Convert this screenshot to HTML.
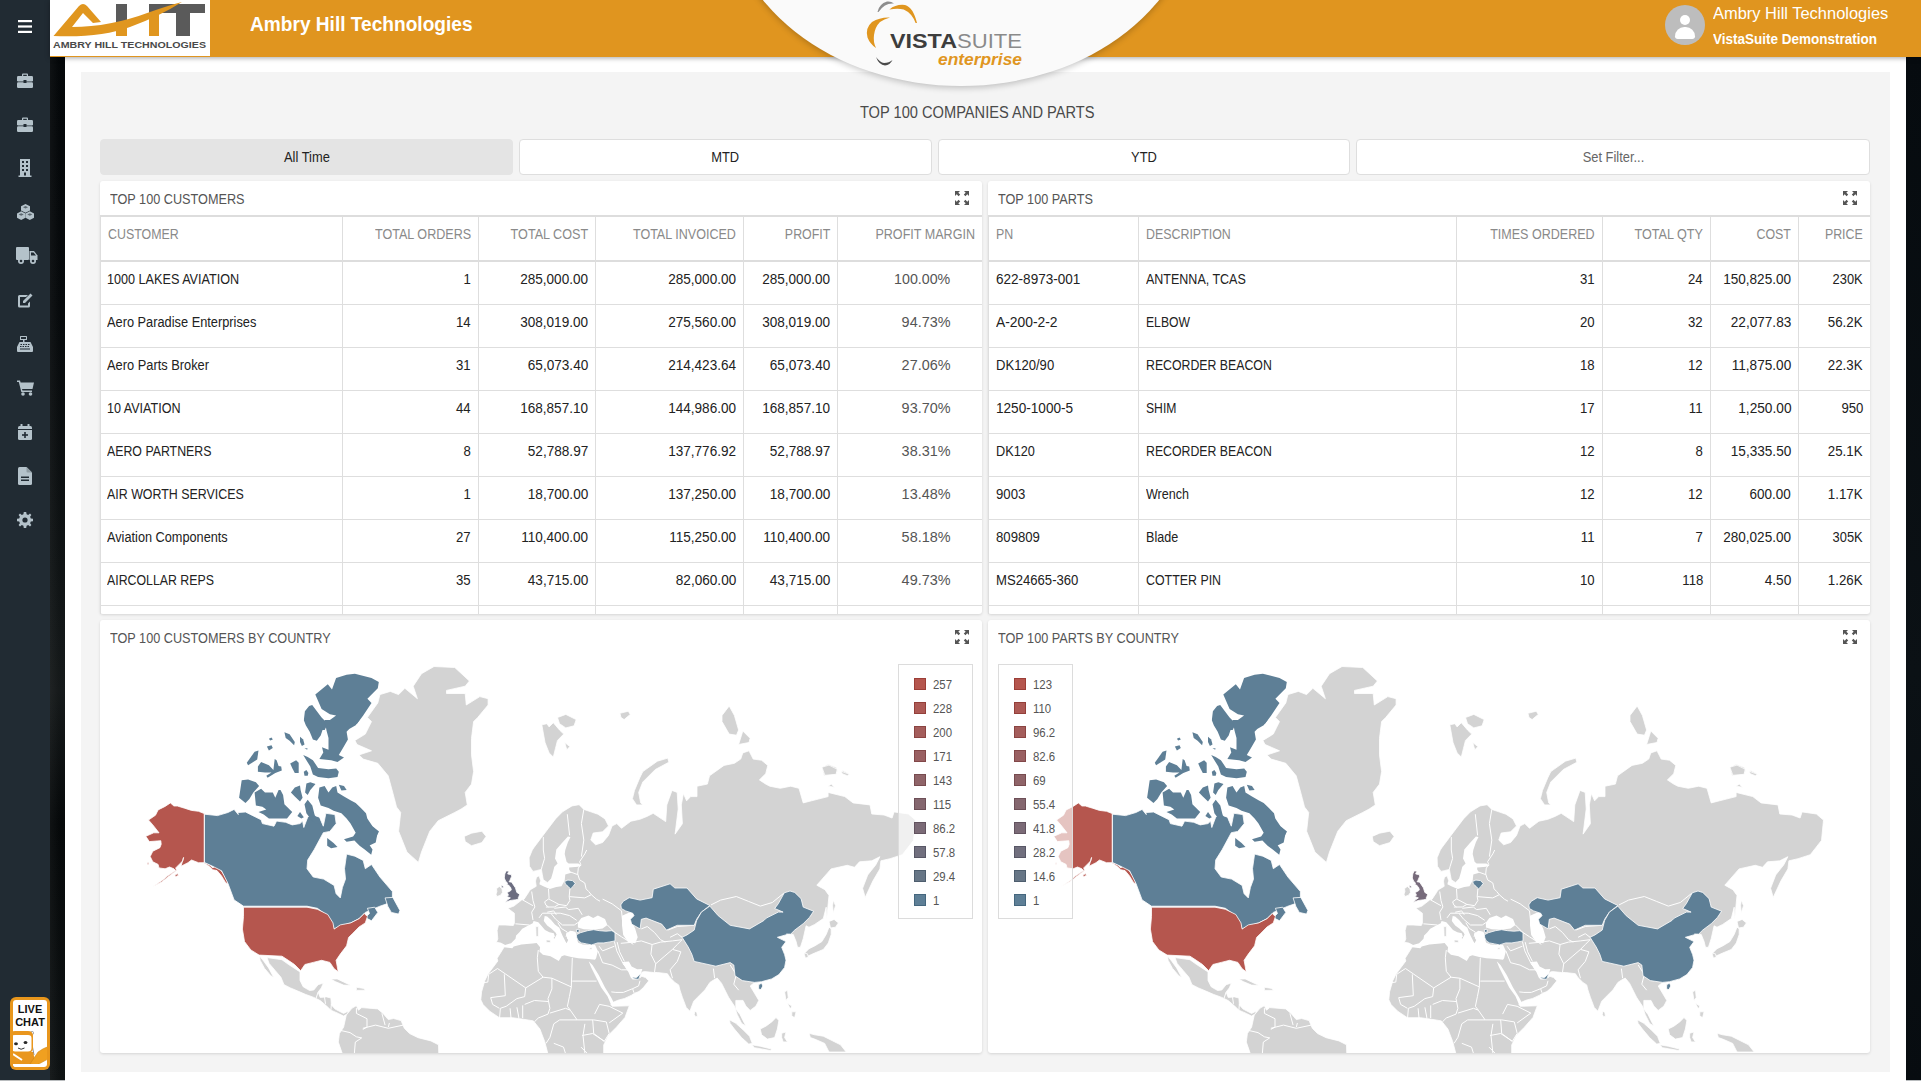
<!DOCTYPE html>
<html><head><meta charset="utf-8">
<style>
*{box-sizing:border-box;margin:0;padding:0}
html,body{width:1921px;height:1081px;overflow:hidden;background:#fff;font-family:"Liberation Sans",sans-serif}
.abs{position:absolute}
#side{position:absolute;left:0;top:0;width:50px;height:1081px;background:#212b33}
#strip{position:absolute;left:50px;top:57px;width:15px;height:1023px;background:linear-gradient(90deg,rgba(255,255,255,.04),rgba(0,0,0,0) 60%),linear-gradient(180deg,#05080a 0%,#080b0d 25%,#101415 50%,#161a1b 62%,#06090a 75%,#0f1314 100%)}
#strip2{position:absolute;left:1906px;top:57px;width:15px;height:1024px;background:linear-gradient(180deg,#060b0f 0%,#0b1115 60%,#070c10 100%)}
#top{position:absolute;left:50px;top:0;width:1871px;height:57px;background:#e0951f;box-shadow:0 1px 5px rgba(0,0,0,.35)}
#logo{position:absolute;left:50px;top:0;width:160px;height:56px;background:#fff}
#panel{position:absolute;left:81px;top:72px;width:1809px;height:1000px;background:#f4f4f4}
.btn{position:absolute;top:139px;height:36px;border:1px solid #dedede;border-radius:4px;background:#fff;font-size:14px;color:#333;text-align:center;line-height:34px}
.card{position:absolute;background:#fff;border-radius:3px;box-shadow:0 1px 3px rgba(0,0,0,.13)}
.ctitle{position:absolute;left:10px;top:10px;font-size:14px;color:#555;white-space:nowrap}
.ctitle span{display:inline-block;transform:scaleX(.905);transform-origin:left center}
.hl{position:absolute;height:1px;background:#dedede}
.hl2{position:absolute;height:2px;background:#dddddd}
.vl{position:absolute;top:217px;width:1px;height:397px;background:#dedede}
.th{position:absolute;top:217px;height:43px;font-size:14px;line-height:35px;color:#8a8a8a;white-space:nowrap}
.td{position:absolute;height:43px;font-size:14px;line-height:35px;color:#222;white-space:nowrap}
.pm{color:#555}
.sl,.sr{display:inline-block}.sl{transform-origin:left center}.sr{transform-origin:right center}.hx{transform:scaleX(.885)}.bx{transform:scaleX(.92)}
.exp{position:absolute;width:14px;height:14px}
.leg{position:absolute;top:664px;width:75px;height:255px;border:1px solid #dcdcdc;background:rgba(255,255,255,.65)}
.li{position:absolute;left:15px;width:12px;height:12px}
.lt{position:absolute;left:34px;font-size:12px;color:#555;line-height:12px;white-space:nowrap}
.ico{position:absolute;left:0;width:50px;display:flex;justify-content:center}
</style></head><body>
<div id="side"></div>
<div id="strip"></div>
<div id="strip2"></div>
<div id="panel"></div>
<div id="top"></div>

<!-- ellipse -->
<div class="abs" style="left:725.5px;top:-286px;width:470px;height:372px;border-radius:50%;background:#fafafa;box-shadow:0 2px 6px rgba(0,0,0,.22)"></div>
<div class="abs" style="left:700px;top:57px;width:530px;height:15px;background:transparent"></div>

<div id="logo">
<svg width="160" height="56" viewBox="0 0 160 56">
 <path d="M66 4 H77 V36 H66 Z" fill="#5a5a5a"/>
 <path d="M99 4 H155 V13 H140 V36 H126 V13 H99 Z" fill="#5a5a5a"/>
 <path d="M99 4 H109 V36 H99 Z" fill="#5a5a5a"/>
 <path d="M3.5 36 L29 6 Q33 2 37 6 L51 22 L43 23 L33 13 L22 27 Q60 27 100 12 Q120 5 132 2 Q110 16 80 27 Q50 38 3.5 36 Z" fill="#e0961f"/>
 <path d="M66 27 V36 H77 V24 Z" fill="#e0961f"/>
 <path d="M99 17 V36 H109 V13 Z" fill="#e0961f"/>
 <text x="3" y="48" font-family="Liberation Sans" font-weight="bold" font-size="9.6" fill="#4a4a4a" textLength="153" lengthAdjust="spacingAndGlyphs">AMBRY HILL TECHNOLOGIES</text>
</svg>
</div>
<div class="abs" style="left:250px;top:13px;font-size:20px;font-weight:bold;color:#fff;white-space:nowrap"><span style="display:inline-block;transform:scaleX(.955);transform-origin:left">Ambry Hill Technologies</span></div>

<!-- vistasuite logo -->
<svg class="abs" style="left:860px;top:0" width="170" height="72" viewBox="0 0 170 72">
 <path d="M17.5 12 Q19 4 27 1.5 Q31 1 34 3.5 Q29 3 25 5.5 Q21 8 18.5 12 Z" fill="#8d8d8d"/>
 <path d="M29.4 9.4 Q36 4 45 5 Q53 7 57 23 L55.6 23 Q52 13 43.7 9.4 Q38 8 29.4 9.4 Z" fill="#e0961f"/>
 <path d="M30 17.5 Q20 17 12 22 Q5 28 7.5 37.5 Q10 44 16 48 Q13 42 14 35 Q15 27 20 22 Q24 19 30 17.5 Z" fill="#e0961f"/>
 <path d="M16 57 Q20 62.5 24 63 Q29 63 32.5 60 Q30 65 25 65.5 Q19 65 16 57 Z" fill="#4a4a4a"/>
 <text x="30" y="47.5" font-family="Liberation Sans" font-weight="bold" font-size="20.5" fill="#3d3d3d" textLength="67" lengthAdjust="spacingAndGlyphs">VISTA</text>
 <text x="97" y="47.5" font-family="Liberation Sans" font-size="20.5" fill="#8a8a8a" textLength="65" lengthAdjust="spacingAndGlyphs">SUITE</text>
 <text x="78" y="65" font-family="Liberation Sans" font-weight="bold" font-style="italic" font-size="17" fill="#e0961f" textLength="84" lengthAdjust="spacingAndGlyphs">enterprise</text>
</svg>

<!-- user -->
<div class="abs" style="left:1665px;top:5px;width:40px;height:40px;border-radius:50%;background:#bdbdbd;overflow:hidden">
 <div class="abs" style="left:15px;top:10px;width:10px;height:10px;border-radius:50%;background:#fff"></div>
 <div class="abs" style="left:10px;top:22px;width:20px;height:12px;border-radius:10px 10px 3px 3px;background:#fff"></div>
</div>
<div class="abs" style="left:1713px;top:4px;font-size:17px;color:#fff;white-space:nowrap"><span style="display:inline-block;transform:scaleX(.968);transform-origin:left">Ambry Hill Technologies</span></div>
<div class="abs" style="left:1713px;top:30px;font-size:15px;font-weight:bold;color:#fff;white-space:nowrap"><span style="display:inline-block;transform:scaleX(.9);transform-origin:left">VistaSuite Demonstration</span></div>

<!-- sidebar icons -->
<div class="ico" style="top:20px;left:0px"><svg width="14" height="13" viewBox="0 0 14 13"><rect x="0" y="0" width="14" height="2.2" fill="#fff"/><rect x="0" y="5.4" width="14" height="2.2" fill="#fff"/><rect x="0" y="10.8" width="14" height="2.2" fill="#fff"/></svg></div>
<div class="ico" style="top:73px;left:0px"><svg width="16" height="15" viewBox="0 0 16 15"><path d="M5 3V1.5Q5 0.5 6 0.5H10Q11 0.5 11 1.5V3H9.8V1.7H6.2V3Z" fill="#b4c2ca"/><rect x="0" y="3" width="16" height="5.5" rx="1.2" fill="#b4c2ca"/><rect x="0" y="9.3" width="16" height="5.7" rx="1.2" fill="#b4c2ca"/><rect x="6.5" y="7" width="3" height="3" fill="#212b33"/></svg></div>
<div class="ico" style="top:117px;left:0px"><svg width="16" height="15" viewBox="0 0 16 15"><path d="M5 3V1.5Q5 0.5 6 0.5H10Q11 0.5 11 1.5V3H9.8V1.7H6.2V3Z" fill="#b4c2ca"/><rect x="0" y="3" width="16" height="5.5" rx="1.2" fill="#b4c2ca"/><rect x="0" y="9.3" width="16" height="5.7" rx="1.2" fill="#b4c2ca"/><rect x="6.5" y="7" width="3" height="3" fill="#212b33"/></svg></div>
<div class="ico" style="top:159px;left:0px"><svg width="14" height="18" viewBox="0 0 14 18"><rect x="2" y="0" width="10" height="17" fill="#b4c2ca"/><rect x="0.5" y="16.5" width="13" height="1.5" fill="#b4c2ca"/><g fill="#212b33"><rect x="4" y="2" width="2" height="2"/><rect x="8" y="2" width="2" height="2"/><rect x="4" y="6" width="2" height="2"/><rect x="8" y="6" width="2" height="2"/><rect x="4" y="10" width="2" height="2"/><rect x="8" y="10" width="2" height="2"/><rect x="6" y="13.5" width="2" height="3"/></g></svg></div>
<div class="ico" style="top:204px;left:0px"><svg width="17" height="16" viewBox="0 0 17 16"><g fill="#b4c2ca"><path d="M8.5 0L13 2.2V6.5L8.5 8.7L4 6.5V2.2Z"/><path d="M4.2 7.3L8.5 9.5V13.8L4.2 16L0 13.8V9.5Z"/><path d="M12.8 7.3L17 9.5V13.8L12.8 16L8.5 13.8V9.5Z"/></g><g fill="#212b33" opacity=".6"><path d="M8.5 2L11 3.2L8.5 4.4L6 3.2Z"/><path d="M4.2 9.3L6.7 10.5L4.2 11.7L1.7 10.5Z"/><path d="M12.8 9.3L15.3 10.5L12.8 11.7L10.3 10.5Z"/></g></svg></div>
<div class="ico" style="top:247px;left:2px"><svg width="22" height="17" viewBox="0 0 22 17"><g fill="#b4c2ca"><rect x="0" y="0" width="13" height="13" rx="1"/><path d="M13.5 4H18L21.5 8.5V13H13.5Z"/><circle cx="5" cy="14" r="3"/><circle cx="17" cy="14" r="3"/></g><g fill="#212b33"><circle cx="5" cy="14" r="1.3"/><circle cx="17" cy="14" r="1.3"/><path d="M15 5.5H17.5L20 8.5H15Z"/></g></svg></div>
<div class="ico" style="top:293px;left:0px"><svg width="16" height="15" viewBox="0 0 16 15"><path d="M11 2H2.5Q1 2 1 3.5V13Q1 14.5 2.5 14.5H11.5Q13 14.5 13 13V8.5L11 10.5V12.5H3V4H9Z" fill="#b4c2ca"/><path d="M13.5 0.5L15.5 2.5L8 10H6V8Z" fill="#b4c2ca"/></svg></div>
<div class="ico" style="top:336px;left:0px"><svg width="16" height="16" viewBox="0 0 16 16"><g fill="#b4c2ca"><rect x="3" y="0" width="7" height="4" rx=".5"/><rect x="6" y="4" width="1.5" height="2"/><path d="M2.5 6H13.5L16 11V15Q16 16 15 16H1Q0 16 0 15V11Z"/></g><g fill="#212b33"><rect x="4" y="1" width="5" height="2"/><rect x="3.5" y="8" width="1.5" height="1"/><rect x="6" y="8" width="1.5" height="1"/><rect x="8.5" y="8" width="1.5" height="1"/><rect x="11" y="8" width="1.5" height="1"/><rect x="3" y="10" width="1.5" height="1"/><rect x="5.5" y="10" width="1.5" height="1"/><rect x="8" y="10" width="1.5" height="1"/><rect x="10.5" y="10" width="1.5" height="1"/><rect x="3" y="12.5" width="10" height="1"/></g></svg></div>
<div class="ico" style="top:380px;left:0px"><svg width="17" height="16" viewBox="0 0 17 16"><g fill="#b4c2ca"><path d="M0 0.5H3L3.6 2.5H17L15.5 9H5L5.5 10.5H15V12H4.3L1.8 2H0Z"/><circle cx="6" cy="14" r="1.8"/><circle cx="13.5" cy="14" r="1.8"/></g></svg></div>
<div class="ico" style="top:424px;left:0px"><svg width="14" height="16" viewBox="0 0 14 16"><g fill="#b4c2ca"><rect x="2.5" y="0" width="2" height="3" rx=".5"/><rect x="9.5" y="0" width="2" height="3" rx=".5"/><path d="M0 3.5Q0 2 1.5 2H12.5Q14 2 14 3.5V5H0Z"/><path d="M0 6H14V14.5Q14 16 12.5 16H1.5Q0 16 0 14.5Z"/></g><g fill="#212b33"><rect x="6.2" y="8" width="1.6" height="6"/><rect x="4" y="10.2" width="6" height="1.6"/></g></svg></div>
<div class="ico" style="top:467px;left:0px"><svg width="14" height="18" viewBox="0 0 14 18"><path d="M1.5 0H8.5L14 5.5V16.5Q14 18 12.5 18H1.5Q0 18 0 16.5V1.5Q0 0 1.5 0Z" fill="#b4c2ca"/><path d="M8.5 0V4.5Q8.5 5.5 9.5 5.5H14" fill="#8f9ca3"/><g fill="#212b33"><rect x="3" y="9.5" width="8" height="1.5"/><rect x="3" y="12.5" width="8" height="1.5"/></g></svg></div>
<div class="ico" style="top:512px;left:0px"><svg width="16" height="16" viewBox="0 0 16 16"><path fill="#b4c2ca" d="M6.8 0H9.2L9.6 2.2L11.2 2.9L13 1.6L14.4 3L13.1 4.8L13.8 6.4L16 6.8V9.2L13.8 9.6L13.1 11.2L14.4 13L13 14.4L11.2 13.1L9.6 13.8L9.2 16H6.8L6.4 13.8L4.8 13.1L3 14.4L1.6 13L2.9 11.2L2.2 9.6L0 9.2V6.8L2.2 6.4L2.9 4.8L1.6 3L3 1.6L4.8 2.9L6.4 2.2Z"/><circle cx="8" cy="8" r="2.6" fill="#212b33"/></svg></div>
<div class="abs" style="left:10px;top:997px;width:40px;height:73px;border-radius:6px;background:#e8961c;padding:3px">
<div style="position:relative;width:34px;height:67px;background:#fff;border-radius:3px;overflow:hidden">
<div style="position:absolute;left:0;top:3px;width:34px;text-align:center;font-size:11px;font-weight:bold;line-height:13px;color:#111">LIVE<br>CHAT</div>
<svg style="position:absolute;left:-3px;top:31px" width="40" height="38" viewBox="0 0 40 38">
<path d="M20 3 L24 24" stroke="#888" stroke-width="1" fill="none"/><circle cx="22" cy="2" r="1.6" fill="#fff" stroke="#888" stroke-width=".7"/>
<path d="M0 4 Q0 0 5 0 H18 Q23 0 23 5 V17 Q23 21.5 18 21.5 H5 Q0 21.5 0 17Z" fill="#e9961d"/>
<path d="M1.5 6.5 Q1.5 4 5 4 H18 Q21.5 4 21.5 7 V17 Q21.5 20.5 18 20.5 H5 Q1.5 20.5 1.5 17Z" fill="#fff"/>
<ellipse cx="6" cy="12.8" rx="1.9" ry="1.5" fill="#2a2a2a"/><ellipse cx="15.5" cy="11.6" rx="1.9" ry="1.5" fill="#2a2a2a"/>
<path d="M8 17 Q11 19.5 14.5 17" stroke="#333" stroke-width="1" fill="none"/>
<path d="M0 21 H23 L26 33 H0Z" fill="#e9961d"/>
<path d="M3 23 L12 29" stroke="#fff" stroke-width="2"/>
<path d="M20 33 L28 21 Q33 17 40 15 V27 L27 34Z" fill="#f0a020" stroke="#c77f10" stroke-width=".5"/>
<path d="M0 33 H30 V38 H0Z" fill="#fff"/>
</svg></div></div>

<div class="abs" style="left:73px;top:104px;width:1809px;text-align:center;font-size:16px;color:#4a4a4a"><span style="display:inline-block;transform:scaleX(.915)">TOP 100 COMPANIES AND PARTS</span></div>
<div class="btn" style="left:100px;width:413px;background:#e4e4e4;border-color:#e4e4e4;color:#222"><span style="display:inline-block;transform:scaleX(.92)">All Time</span></div>
<div class="btn" style="left:519px;width:413px;color:#222"><span style="display:inline-block;transform:scaleX(.92)">MTD</span></div>
<div class="btn" style="left:938px;width:412px;color:#222"><span style="display:inline-block;transform:scaleX(.92)">YTD</span></div>
<div class="btn" style="left:1356px;width:514px;color:#666"><span style="display:inline-block;transform:scaleX(.92)">Set Filter...</span></div>

<div class="card" style="left:100px;top:181px;width:882px;height:433px"><div class="ctitle"><span>TOP 100 CUSTOMERS</span></div></div>
<div class="card" style="left:988px;top:181px;width:882px;height:433px"><div class="ctitle"><span>TOP 100 PARTS</span></div></div>
<div class="card" style="left:100px;top:620px;width:882px;height:433px"><div class="ctitle"><span>TOP 100 CUSTOMERS BY COUNTRY</span></div></div>
<div class="hl2" style="left:100px;top:215px;width:882px"></div>
<div class="hl2" style="left:100px;top:260px;width:882px"></div>
<div class="hl" style="left:100px;top:304px;width:882px"></div>
<div class="hl" style="left:100px;top:347px;width:882px"></div>
<div class="hl" style="left:100px;top:390px;width:882px"></div>
<div class="hl" style="left:100px;top:433px;width:882px"></div>
<div class="hl" style="left:100px;top:476px;width:882px"></div>
<div class="hl" style="left:100px;top:519px;width:882px"></div>
<div class="hl" style="left:100px;top:562px;width:882px"></div>
<div class="hl" style="left:100px;top:605px;width:882px"></div>
<div class="vl" style="left:100px"></div>
<div class="vl" style="left:342px"></div>
<div class="vl" style="left:478px"></div>
<div class="vl" style="left:595px"></div>
<div class="vl" style="left:743px"></div>
<div class="vl" style="left:837px"></div>
<div class="th" style="left:100px;width:242px;text-align:left;padding-left:8px"><span class="sl" style="transform:scaleX(0.886)">CUSTOMER</span></div>
<div class="th" style="left:342px;width:136px;text-align:right;padding-right:7px"><span class="sr" style="transform:scaleX(0.897)">TOTAL ORDERS</span></div>
<div class="th" style="left:478px;width:117px;text-align:right;padding-right:7px"><span class="sr" style="transform:scaleX(0.900)">TOTAL COST</span></div>
<div class="th" style="left:595px;width:148px;text-align:right;padding-right:7px"><span class="sr" style="transform:scaleX(0.896)">TOTAL INVOICED</span></div>
<div class="th" style="left:743px;width:94px;text-align:right;padding-right:7px"><span class="sr" style="transform:scaleX(0.886)">PROFIT</span></div>
<div class="th" style="left:837px;width:145px;text-align:right;padding-right:7px"><span class="sr" style="transform:scaleX(0.897)">PROFIT MARGIN</span></div>
<div class="td" style="left:100px;top:262px;width:242px;text-align:left;padding-left:7px"><span class="sl" style="transform:scaleX(0.902)">1000 LAKES AVIATION</span></div>
<div class="td" style="left:342px;top:262px;width:136px;text-align:right;padding-right:7px"><span class="sr" style="transform:scaleX(0.940)">1</span></div>
<div class="td" style="left:478px;top:262px;width:117px;text-align:right;padding-right:7px"><span class="sr" style="transform:scaleX(0.969)">285,000.00</span></div>
<div class="td" style="left:595px;top:262px;width:148px;text-align:right;padding-right:7px"><span class="sr" style="transform:scaleX(0.969)">285,000.00</span></div>
<div class="td" style="left:743px;top:262px;width:94px;text-align:right;padding-right:7px"><span class="sr" style="transform:scaleX(0.969)">285,000.00</span></div>
<div class="td pm" style="left:837px;top:262px;width:145px;text-align:right;padding-right:32px"><span class="sr" style="transform:scaleX(1.017)">100.00%</span></div>
<div class="td" style="left:100px;top:305px;width:242px;text-align:left;padding-left:7px"><span class="sl" style="transform:scaleX(0.914)">Aero Paradise Enterprises</span></div>
<div class="td" style="left:342px;top:305px;width:136px;text-align:right;padding-right:7px"><span class="sr" style="transform:scaleX(0.940)">14</span></div>
<div class="td" style="left:478px;top:305px;width:117px;text-align:right;padding-right:7px"><span class="sr" style="transform:scaleX(0.969)">308,019.00</span></div>
<div class="td" style="left:595px;top:305px;width:148px;text-align:right;padding-right:7px"><span class="sr" style="transform:scaleX(0.969)">275,560.00</span></div>
<div class="td" style="left:743px;top:305px;width:94px;text-align:right;padding-right:7px"><span class="sr" style="transform:scaleX(0.969)">308,019.00</span></div>
<div class="td pm" style="left:837px;top:305px;width:145px;text-align:right;padding-right:32px"><span class="sr" style="transform:scaleX(1.029)">94.73%</span></div>
<div class="td" style="left:100px;top:348px;width:242px;text-align:left;padding-left:7px"><span class="sl" style="transform:scaleX(0.917)">Aero Parts Broker</span></div>
<div class="td" style="left:342px;top:348px;width:136px;text-align:right;padding-right:7px"><span class="sr" style="transform:scaleX(0.940)">31</span></div>
<div class="td" style="left:478px;top:348px;width:117px;text-align:right;padding-right:7px"><span class="sr" style="transform:scaleX(0.972)">65,073.40</span></div>
<div class="td" style="left:595px;top:348px;width:148px;text-align:right;padding-right:7px"><span class="sr" style="transform:scaleX(0.969)">214,423.64</span></div>
<div class="td" style="left:743px;top:348px;width:94px;text-align:right;padding-right:7px"><span class="sr" style="transform:scaleX(0.972)">65,073.40</span></div>
<div class="td pm" style="left:837px;top:348px;width:145px;text-align:right;padding-right:32px"><span class="sr" style="transform:scaleX(1.029)">27.06%</span></div>
<div class="td" style="left:100px;top:391px;width:242px;text-align:left;padding-left:7px"><span class="sl" style="transform:scaleX(0.898)">10 AVIATION</span></div>
<div class="td" style="left:342px;top:391px;width:136px;text-align:right;padding-right:7px"><span class="sr" style="transform:scaleX(0.940)">44</span></div>
<div class="td" style="left:478px;top:391px;width:117px;text-align:right;padding-right:7px"><span class="sr" style="transform:scaleX(0.969)">168,857.10</span></div>
<div class="td" style="left:595px;top:391px;width:148px;text-align:right;padding-right:7px"><span class="sr" style="transform:scaleX(0.969)">144,986.00</span></div>
<div class="td" style="left:743px;top:391px;width:94px;text-align:right;padding-right:7px"><span class="sr" style="transform:scaleX(0.969)">168,857.10</span></div>
<div class="td pm" style="left:837px;top:391px;width:145px;text-align:right;padding-right:32px"><span class="sr" style="transform:scaleX(1.029)">93.70%</span></div>
<div class="td" style="left:100px;top:434px;width:242px;text-align:left;padding-left:7px"><span class="sl" style="transform:scaleX(0.881)">AERO PARTNERS</span></div>
<div class="td" style="left:342px;top:434px;width:136px;text-align:right;padding-right:7px"><span class="sr" style="transform:scaleX(0.940)">8</span></div>
<div class="td" style="left:478px;top:434px;width:117px;text-align:right;padding-right:7px"><span class="sr" style="transform:scaleX(0.972)">52,788.97</span></div>
<div class="td" style="left:595px;top:434px;width:148px;text-align:right;padding-right:7px"><span class="sr" style="transform:scaleX(0.969)">137,776.92</span></div>
<div class="td" style="left:743px;top:434px;width:94px;text-align:right;padding-right:7px"><span class="sr" style="transform:scaleX(0.972)">52,788.97</span></div>
<div class="td pm" style="left:837px;top:434px;width:145px;text-align:right;padding-right:32px"><span class="sr" style="transform:scaleX(1.029)">38.31%</span></div>
<div class="td" style="left:100px;top:477px;width:242px;text-align:left;padding-left:7px"><span class="sl" style="transform:scaleX(0.887)">AIR WORTH SERVICES</span></div>
<div class="td" style="left:342px;top:477px;width:136px;text-align:right;padding-right:7px"><span class="sr" style="transform:scaleX(0.940)">1</span></div>
<div class="td" style="left:478px;top:477px;width:117px;text-align:right;padding-right:7px"><span class="sr" style="transform:scaleX(0.972)">18,700.00</span></div>
<div class="td" style="left:595px;top:477px;width:148px;text-align:right;padding-right:7px"><span class="sr" style="transform:scaleX(0.969)">137,250.00</span></div>
<div class="td" style="left:743px;top:477px;width:94px;text-align:right;padding-right:7px"><span class="sr" style="transform:scaleX(0.972)">18,700.00</span></div>
<div class="td pm" style="left:837px;top:477px;width:145px;text-align:right;padding-right:32px"><span class="sr" style="transform:scaleX(1.029)">13.48%</span></div>
<div class="td" style="left:100px;top:520px;width:242px;text-align:left;padding-left:7px"><span class="sl" style="transform:scaleX(0.909)">Aviation Components</span></div>
<div class="td" style="left:342px;top:520px;width:136px;text-align:right;padding-right:7px"><span class="sr" style="transform:scaleX(0.940)">27</span></div>
<div class="td" style="left:478px;top:520px;width:117px;text-align:right;padding-right:7px"><span class="sr" style="transform:scaleX(0.969)">110,400.00</span></div>
<div class="td" style="left:595px;top:520px;width:148px;text-align:right;padding-right:7px"><span class="sr" style="transform:scaleX(0.969)">115,250.00</span></div>
<div class="td" style="left:743px;top:520px;width:94px;text-align:right;padding-right:7px"><span class="sr" style="transform:scaleX(0.969)">110,400.00</span></div>
<div class="td pm" style="left:837px;top:520px;width:145px;text-align:right;padding-right:32px"><span class="sr" style="transform:scaleX(1.029)">58.18%</span></div>
<div class="td" style="left:100px;top:563px;width:242px;text-align:left;padding-left:7px"><span class="sl" style="transform:scaleX(0.881)">AIRCOLLAR REPS</span></div>
<div class="td" style="left:342px;top:563px;width:136px;text-align:right;padding-right:7px"><span class="sr" style="transform:scaleX(0.940)">35</span></div>
<div class="td" style="left:478px;top:563px;width:117px;text-align:right;padding-right:7px"><span class="sr" style="transform:scaleX(0.972)">43,715.00</span></div>
<div class="td" style="left:595px;top:563px;width:148px;text-align:right;padding-right:7px"><span class="sr" style="transform:scaleX(0.972)">82,060.00</span></div>
<div class="td" style="left:743px;top:563px;width:94px;text-align:right;padding-right:7px"><span class="sr" style="transform:scaleX(0.972)">43,715.00</span></div>
<div class="td pm" style="left:837px;top:563px;width:145px;text-align:right;padding-right:32px"><span class="sr" style="transform:scaleX(1.029)">49.73%</span></div>
<div class="hl2" style="left:988px;top:215px;width:882px"></div>
<div class="hl2" style="left:988px;top:260px;width:882px"></div>
<div class="hl" style="left:988px;top:304px;width:882px"></div>
<div class="hl" style="left:988px;top:347px;width:882px"></div>
<div class="hl" style="left:988px;top:390px;width:882px"></div>
<div class="hl" style="left:988px;top:433px;width:882px"></div>
<div class="hl" style="left:988px;top:476px;width:882px"></div>
<div class="hl" style="left:988px;top:519px;width:882px"></div>
<div class="hl" style="left:988px;top:562px;width:882px"></div>
<div class="hl" style="left:988px;top:605px;width:882px"></div>
<div class="vl" style="left:988px"></div>
<div class="vl" style="left:1138px"></div>
<div class="vl" style="left:1456px"></div>
<div class="vl" style="left:1602px"></div>
<div class="vl" style="left:1710px"></div>
<div class="vl" style="left:1798px"></div>
<div class="th" style="left:988px;width:150px;text-align:left;padding-left:8px"><span class="sl" style="transform:scaleX(0.886)">PN</span></div>
<div class="th" style="left:1138px;width:318px;text-align:left;padding-left:8px"><span class="sl" style="transform:scaleX(0.886)">DESCRIPTION</span></div>
<div class="th" style="left:1456px;width:146px;text-align:right;padding-right:7px"><span class="sr" style="transform:scaleX(0.896)">TIMES ORDERED</span></div>
<div class="th" style="left:1602px;width:108px;text-align:right;padding-right:7px"><span class="sr" style="transform:scaleX(0.901)">TOTAL QTY</span></div>
<div class="th" style="left:1710px;width:88px;text-align:right;padding-right:7px"><span class="sr" style="transform:scaleX(0.886)">COST</span></div>
<div class="th" style="left:1798px;width:72px;text-align:right;padding-right:7px"><span class="sr" style="transform:scaleX(0.886)">PRICE</span></div>
<div class="td" style="left:988px;top:262px;width:150px;text-align:left;padding-left:8px"><span class="sl" style="transform:scaleX(0.968)">622-8973-001</span></div>
<div class="td" style="left:1138px;top:262px;width:318px;text-align:left;padding-left:8px"><span class="sl" style="transform:scaleX(0.893)">ANTENNA, TCAS</span></div>
<div class="td" style="left:1456px;top:262px;width:146px;text-align:right;padding-right:7px"><span class="sr" style="transform:scaleX(0.940)">31</span></div>
<div class="td" style="left:1602px;top:262px;width:108px;text-align:right;padding-right:7px"><span class="sr" style="transform:scaleX(0.940)">24</span></div>
<div class="td" style="left:1710px;top:262px;width:88px;text-align:right;padding-right:7px"><span class="sr" style="transform:scaleX(0.969)">150,825.00</span></div>
<div class="td" style="left:1798px;top:262px;width:72px;text-align:right;padding-right:7px"><span class="sr" style="transform:scaleX(0.920)">230K</span></div>
<div class="td" style="left:988px;top:305px;width:150px;text-align:left;padding-left:8px"><span class="sl" style="transform:scaleX(0.988)">A-200-2-2</span></div>
<div class="td" style="left:1138px;top:305px;width:318px;text-align:left;padding-left:8px"><span class="sl" style="transform:scaleX(0.870)">ELBOW</span></div>
<div class="td" style="left:1456px;top:305px;width:146px;text-align:right;padding-right:7px"><span class="sr" style="transform:scaleX(0.940)">20</span></div>
<div class="td" style="left:1602px;top:305px;width:108px;text-align:right;padding-right:7px"><span class="sr" style="transform:scaleX(0.940)">32</span></div>
<div class="td" style="left:1710px;top:305px;width:88px;text-align:right;padding-right:7px"><span class="sr" style="transform:scaleX(0.972)">22,077.83</span></div>
<div class="td" style="left:1798px;top:305px;width:72px;text-align:right;padding-right:7px"><span class="sr" style="transform:scaleX(0.950)">56.2K</span></div>
<div class="td" style="left:988px;top:348px;width:150px;text-align:left;padding-left:8px"><span class="sl" style="transform:scaleX(0.934)">DK120/90</span></div>
<div class="td" style="left:1138px;top:348px;width:318px;text-align:left;padding-left:8px"><span class="sl" style="transform:scaleX(0.879)">RECORDER BEACON</span></div>
<div class="td" style="left:1456px;top:348px;width:146px;text-align:right;padding-right:7px"><span class="sr" style="transform:scaleX(0.940)">18</span></div>
<div class="td" style="left:1602px;top:348px;width:108px;text-align:right;padding-right:7px"><span class="sr" style="transform:scaleX(0.940)">12</span></div>
<div class="td" style="left:1710px;top:348px;width:88px;text-align:right;padding-right:7px"><span class="sr" style="transform:scaleX(0.972)">11,875.00</span></div>
<div class="td" style="left:1798px;top:348px;width:72px;text-align:right;padding-right:7px"><span class="sr" style="transform:scaleX(0.950)">22.3K</span></div>
<div class="td" style="left:988px;top:391px;width:150px;text-align:left;padding-left:8px"><span class="sl" style="transform:scaleX(0.971)">1250-1000-5</span></div>
<div class="td" style="left:1138px;top:391px;width:318px;text-align:left;padding-left:8px"><span class="sl" style="transform:scaleX(0.870)">SHIM</span></div>
<div class="td" style="left:1456px;top:391px;width:146px;text-align:right;padding-right:7px"><span class="sr" style="transform:scaleX(0.940)">17</span></div>
<div class="td" style="left:1602px;top:391px;width:108px;text-align:right;padding-right:7px"><span class="sr" style="transform:scaleX(0.940)">11</span></div>
<div class="td" style="left:1710px;top:391px;width:88px;text-align:right;padding-right:7px"><span class="sr" style="transform:scaleX(0.977)">1,250.00</span></div>
<div class="td" style="left:1798px;top:391px;width:72px;text-align:right;padding-right:7px"><span class="sr" style="transform:scaleX(0.940)">950</span></div>
<div class="td" style="left:988px;top:434px;width:150px;text-align:left;padding-left:8px"><span class="sl" style="transform:scaleX(0.908)">DK120</span></div>
<div class="td" style="left:1138px;top:434px;width:318px;text-align:left;padding-left:8px"><span class="sl" style="transform:scaleX(0.879)">RECORDER BEACON</span></div>
<div class="td" style="left:1456px;top:434px;width:146px;text-align:right;padding-right:7px"><span class="sr" style="transform:scaleX(0.940)">12</span></div>
<div class="td" style="left:1602px;top:434px;width:108px;text-align:right;padding-right:7px"><span class="sr" style="transform:scaleX(0.940)">8</span></div>
<div class="td" style="left:1710px;top:434px;width:88px;text-align:right;padding-right:7px"><span class="sr" style="transform:scaleX(0.972)">15,335.50</span></div>
<div class="td" style="left:1798px;top:434px;width:72px;text-align:right;padding-right:7px"><span class="sr" style="transform:scaleX(0.950)">25.1K</span></div>
<div class="td" style="left:988px;top:477px;width:150px;text-align:left;padding-left:8px"><span class="sl" style="transform:scaleX(0.940)">9003</span></div>
<div class="td" style="left:1138px;top:477px;width:318px;text-align:left;padding-left:8px"><span class="sl" style="transform:scaleX(0.896)">Wrench</span></div>
<div class="td" style="left:1456px;top:477px;width:146px;text-align:right;padding-right:7px"><span class="sr" style="transform:scaleX(0.940)">12</span></div>
<div class="td" style="left:1602px;top:477px;width:108px;text-align:right;padding-right:7px"><span class="sr" style="transform:scaleX(0.940)">12</span></div>
<div class="td" style="left:1710px;top:477px;width:88px;text-align:right;padding-right:7px"><span class="sr" style="transform:scaleX(0.964)">600.00</span></div>
<div class="td" style="left:1798px;top:477px;width:72px;text-align:right;padding-right:7px"><span class="sr" style="transform:scaleX(0.950)">1.17K</span></div>
<div class="td" style="left:988px;top:520px;width:150px;text-align:left;padding-left:8px"><span class="sl" style="transform:scaleX(0.940)">809809</span></div>
<div class="td" style="left:1138px;top:520px;width:318px;text-align:left;padding-left:8px"><span class="sl" style="transform:scaleX(0.897)">Blade</span></div>
<div class="td" style="left:1456px;top:520px;width:146px;text-align:right;padding-right:7px"><span class="sr" style="transform:scaleX(0.940)">11</span></div>
<div class="td" style="left:1602px;top:520px;width:108px;text-align:right;padding-right:7px"><span class="sr" style="transform:scaleX(0.940)">7</span></div>
<div class="td" style="left:1710px;top:520px;width:88px;text-align:right;padding-right:7px"><span class="sr" style="transform:scaleX(0.969)">280,025.00</span></div>
<div class="td" style="left:1798px;top:520px;width:72px;text-align:right;padding-right:7px"><span class="sr" style="transform:scaleX(0.920)">305K</span></div>
<div class="td" style="left:988px;top:563px;width:150px;text-align:left;padding-left:8px"><span class="sl" style="transform:scaleX(0.937)">MS24665-360</span></div>
<div class="td" style="left:1138px;top:563px;width:318px;text-align:left;padding-left:8px"><span class="sl" style="transform:scaleX(0.885)">COTTER PIN</span></div>
<div class="td" style="left:1456px;top:563px;width:146px;text-align:right;padding-right:7px"><span class="sr" style="transform:scaleX(0.940)">10</span></div>
<div class="td" style="left:1602px;top:563px;width:108px;text-align:right;padding-right:7px"><span class="sr" style="transform:scaleX(0.940)">118</span></div>
<div class="td" style="left:1710px;top:563px;width:88px;text-align:right;padding-right:7px"><span class="sr" style="transform:scaleX(0.977)">4.50</span></div>
<div class="td" style="left:1798px;top:563px;width:72px;text-align:right;padding-right:7px"><span class="sr" style="transform:scaleX(0.950)">1.26K</span></div>
<div class="card" style="left:988px;top:620px;width:882px;height:433px"><div class="ctitle"><span>TOP 100 PARTS BY COUNTRY</span></div></div>

<svg class="abs" style="left:0;top:0" width="1921" height="1081" viewBox="0 0 1921 1081">
<defs>
<clipPath id="c1"><rect x="100" y="650" width="882" height="403"/></clipPath>
<clipPath id="c2"><rect x="80" y="650" width="882" height="403"/></clipPath>
<g id="wm">
<path class="g" d="M267.0 957.6L281.9 959.7L288.3 964.3L300.0 971.9L300.0 980.4L303.2 986.8L309.6 990.5L313.8 990.0L318.1 984.7L323.4 983.1L321.3 987.9L318.1 992.1L320.2 997.4L326.6 996.9L330.9 998.0L331.4 1004.9L335.1 1009.1L343.6 1013.4L347.9 1011.3L347.9 1013.4L343.6 1016.1L338.3 1013.4L330.9 1010.2L326.6 1006.0L320.2 1000.6L313.8 997.4L305.3 994.3L297.9 991.1L290.4 987.9L284.0 984.7L280.9 977.2L275.5 970.9L269.1 963.4Z"/>
<path class="g" d="M259.6 956.0L263.8 961.3L268.6 967.9L273.9 977.8L270.7 975.6L264.4 968.2L260.1 960.2Z"/>
<path class="g" d="M330.9 979.1L337.2 978.9L343.6 982.0L351.1 985.5L343.6 985.1L335.1 981.5Z"/>
<path class="g" d="M356.4 987.3L363.8 988.4L365.4 990.2L356.4 990.4Z"/>
<path class="g" d="M346.3 1015.0L352.1 1008.1L356.4 1005.7L358.5 1010.2L361.7 1007.6L377.7 1008.9L383.0 1013.4L388.3 1019.6L393.6 1018.5L401.1 1020.6L404.3 1028.3L409.6 1033.6L418.1 1037.7L430.9 1040.9L438.5 1044.8L438.8 1054.4L342.6 1054.4L338.3 1042.1L339.4 1033.6L343.6 1027.2Z"/>
<path class="g" d="M434.0 666.5L454.8 667.5L469.4 681.0L465.2 686.2L446.5 690.4L446.5 693.5L465.2 693.5L466.3 705.0L479.8 696.6L488.1 698.7L488.1 705.0L477.7 717.5L473.6 721.6L471.5 738.3L471.5 754.9L473.6 771.6L471.5 784.1L465.2 792.4L467.3 804.9L461.1 809.1L454.8 812.4L438.2 820.7L429.8 831.2L421.5 852.0L418.4 862.4L406.9 852.0L398.6 831.2L400.7 812.4L396.5 807.0L394.4 798.7L388.2 775.8L377.8 763.3L363.2 759.1L359.0 754.9L371.5 750.8L357.0 744.5L354.9 740.4L365.3 734.1L371.5 721.6L367.4 717.5L377.8 702.9L379.9 694.6L390.3 691.4L398.6 694.6L404.9 688.3L417.4 698.7L413.2 686.2L421.5 673.7Z"/>
<path class="g" d="M464.2 836.4L471.5 833.2L481.9 831.2L486.1 836.4L481.9 842.6L471.5 845.7L465.2 841.6Z"/>
<path class="g" d="M548.0 1054.1L544.8 1041.9L539.9 1029.0L533.4 1020.9L523.7 1019.3L512.4 1017.7L499.4 1017.7L489.7 1011.2L483.2 1004.7L480.8 999.8L481.6 991.7L484.9 980.4L488.1 973.9L493.0 967.4L497.8 961.0L497.1 958.3L500.6 952.8L504.0 947.2L504.7 945.1L500.6 943.0L496.4 942.3L497.8 938.9L497.1 930.6L498.5 925.0L505.0 925.0L513.3 925.5L514.4 923.3L514.4 913.3L507.8 908.3L513.9 906.1L521.6 900.0L523.9 899.4L528.3 892.8L530.0 890.0L531.7 888.9L536.2 886.3L535.5 881.1L536.5 877.2L539.1 875.8L540.6 880.4L542.3 882.7L547.2 882.4L543.3 879.8L542.3 874.6L541.4 869.4L536.2 870.7L533.0 871.4L529.4 866.2L529.1 857.8L532.3 850.0L534.2 847.2L541.3 837.7L548.4 828.3L555.5 818.9L562.5 811.8L572.0 805.9L579.1 804.7L583.8 809.4L590.8 811.8L597.9 814.2L605.0 818.9L608.5 825.9L602.6 831.8L593.2 833.0L590.8 840.1L595.6 844.8L602.6 842.5L608.5 835.4L612.1 825.9L616.8 823.6L621.5 828.3L630.9 821.2L639.9 819.3L639.9 819.3L647.0 816.4L653.2 813.3L665.7 821.6L666.8 804.9L672.0 790.4L677.2 792.4L678.2 809.1L675.1 834.1L682.4 823.7L681.3 804.9L683.4 793.5L686.6 800.8L690.7 796.6L697.0 796.6L697.0 786.2L707.4 784.1L709.5 775.8L724.0 765.4L734.4 763.3L740.7 759.1L742.8 752.9L749.0 750.8L753.2 759.1L761.5 760.2L767.8 765.4L765.7 773.7L759.4 779.9L765.7 784.1L769.8 786.2L780.3 788.3L790.7 786.2L799.0 788.3L803.2 802.9L811.5 800.8L828.1 796.6L828.1 792.4L844.8 796.6L853.1 802.9L870.0 804.9L871.8 814.0L884.0 815.0L892.1 818.0L894.1 811.9L908.4 814.0L915.5 820.1L913.5 840.4L902.3 854.7L890.1 858.7L880.9 860.8L879.9 868.9L872.8 881.1L865.2 897.4L862.6 888.3L867.7 875.0L875.8 864.8L879.9 856.7L871.8 860.8L859.5 861.8L854.5 867.3L847.3 865.3L831.1 868.9L816.8 885.2L824.9 889.7L829.0 895.4L826.6 920.0L826.2 907.2L823.3 918.6L814.7 924.4L809.0 927.2L806.1 925.8L803.2 938.7L800.4 947.3L797.5 947.3L796.1 941.6L793.2 934.4L787.5 934.4L777.4 937.3L786.0 941.6L781.7 947.3L784.6 954.5L786.0 960.2L784.6 967.4L778.9 974.6L771.7 978.9L761.6 981.7L754.5 982.4L750.2 986.0L754.5 993.2L758.8 1000.4L755.9 1006.1L750.2 1010.4L745.9 1006.1L743.0 1000.4L735.8 1000.4L735.8 1009.0L740.1 1014.7L744.4 1023.3L745.9 1026.2L741.6 1023.3L737.3 1014.7L734.4 1006.1L728.7 997.5L725.8 991.8L721.5 983.2L717.2 978.1L713.6 980.0L709.9 982.4L704.9 989.9L697.4 997.4L693.7 1001.2L689.9 1011.2L686.2 1007.4L682.4 997.4L679.9 989.9L678.7 984.9L674.9 982.4L669.9 977.5L667.4 973.7L657.4 972.5L653.7 972.5L644.6 971.6L642.3 972.0L640.9 973.9L640.0 977.6L641.8 976.2L645.5 977.6L648.8 980.8L643.2 987.8L639.0 991.5L634.4 993.3L631.6 995.2L624.7 998.4L617.8 1000.3L612.7 1002.6L610.8 1004.0L612.2 1006.3L629.3 1005.8L625.0 1017.4L616.2 1027.4L608.7 1034.9L603.7 1044.9L603.7 1054.3Z"/>
<path class="w" d="M505.0 944.9L511.1 943.3L515.5 938.8L516.1 935.5L519.4 932.2L522.2 928.8L528.3 925.5L532.7 923.3L533.6 921.1L538.3 922.2L541.6 926.1L545.0 930.0L549.4 932.2L553.8 933.3L554.9 936.6L553.6 938.0L554.4 938.8L556.6 934.4L555.5 932.5L551.6 928.8L547.2 925.5L543.8 921.1L544.7 916.1L547.2 916.6L551.1 920.0L554.9 924.4L559.4 927.7L561.0 932.2L562.7 936.1L565.5 941.6L566.6 943.3L568.8 938.8L569.9 932.7L571.6 931.1L574.9 932.2L576.6 936.1L577.1 939.9L578.3 942.7L582.7 944.4L588.2 944.9L595.0 944.7L597.9 951.0L596.1 958.2L595.0 959.7L588.7 959.0L578.3 958.3L571.3 956.9L564.4 955.2L561.6 956.2L558.8 961.1L550.5 956.2L542.9 954.8L539.4 951.4L540.1 947.2L536.6 943.0L532.5 943.4L521.4 944.4L513.7 946.5L512.3 948.2L504.0 947.2L501.9 945.8Z"/>
<path class="w" d="M577.9 922.6L581.4 917.9L588.5 915.6L593.2 917.9L597.9 915.6L605.0 919.1L607.4 925.0L602.6 928.5L593.2 929.7L583.8 929.2L577.9 927.4Z"/>
<path class="w" d="M622.0 915.7L630.4 912.1L635.3 914.5L631.6 920.5L635.3 928.9L637.7 937.3L635.3 943.3L628.0 942.1L623.2 934.9L622.0 925.3Z"/>
<path class="w" d="M566.1 933.8L570.2 930.7L575.3 931.7L577.3 935.8L576.3 940.9L571.2 942.9L567.2 938.8Z"/>
<path class="w" d="M622.4 961.9L625.2 967.4L628.4 972.0L630.7 977.6L632.6 979.4L638.6 979.0L640.9 973.9L642.3 969.0L637.2 969.3L631.6 966.5L628.9 961.4Z"/>
<path class="w" d="M588.7 961.2L592.5 965.0L598.7 975.0L605.0 987.4L611.2 997.4L613.7 1002.4L611.2 1004.9L607.5 996.2L601.2 987.4L596.2 977.5L591.2 967.5Z"/>
<path class="w" d="M540.1 881.1L539.4 884.3L543.3 886.3L549.8 888.9L556.3 886.9L561.5 886.3L564.7 880.4L565.3 874.6L571.2 872.7L569.2 869.4L569.2 867.5L578.3 866.8L581.5 865.5L578.3 863.6L568.6 863.6L566.6 861.7L564.7 853.9L565.3 850.0L567.9 842.2L570.5 837.0L567.9 836.4L561.5 843.5L556.3 849.4L555.0 858.4L557.6 863.6L554.3 866.8L553.0 872.0L551.1 878.5L547.2 882.4L544.6 882.7Z"/>
<path class="g" d="M541.8 724.8L547.0 723.7L549.1 726.9L553.3 722.7L559.5 730.0L563.7 734.1L557.5 740.4L555.4 748.7L553.3 757.0L549.1 752.9L545.0 742.5Z"/>
<path class="g" d="M557.5 717.5L565.8 714.4L576.2 719.6L574.1 725.8L565.8 727.9L559.5 723.7Z"/>
<path class="g" d="M564.7 742.5L569.9 746.6L566.8 749.8Z"/>
<path class="g" d="M619.9 713.3L628.3 711.2L630.3 714.4L624.1 719.6L621.0 717.5Z"/>
<path class="g" d="M642.8 771.6L657.4 761.2L667.8 758.1L668.9 762.2L655.3 769.5L642.8 782.0L638.7 792.4L640.7 802.9L642.8 804.9L636.6 804.9L632.4 798.7L634.5 790.4L639.7 777.9Z"/>
<path class="g" d="M722.0 715.4L729.2 706.0L734.4 715.4L738.6 730.0L736.5 735.2L729.2 734.1L722.0 721.6Z"/>
<path class="g" d="M738.6 744.5L742.8 731.0L750.1 738.3L749.0 742.5Z"/>
<path class="g" d="M821.9 767.5L828.1 764.3L836.5 767.5L837.5 771.6L830.2 774.7L824.0 775.8Z"/>
<path class="g" d="M842.7 770.6L849.0 773.7L846.9 775.8L841.7 772.7Z"/>
<path class="g" d="M828.1 786.2L831.3 784.1L834.4 787.2Z"/>
<path class="g" d="M821.9 767.2L829.0 765.1L837.2 769.2L836.1 774.3L824.9 775.3Z"/>
<path class="g" d="M841.2 771.2L849.4 774.3L847.3 775.7L842.2 773.7Z"/>
<path class="g" d="M833.3 900.0L835.5 905.7L833.3 912.9L832.6 905.7Z"/>
<path class="g" d="M806.8 956.6L814.7 953.0L823.3 949.5L828.3 943.0L831.2 934.4L831.2 928.7L829.0 927.2L826.2 934.4L821.9 941.6L814.7 945.9L809.0 948.7L804.7 953.0Z"/>
<path class="g" d="M829.0 921.5L834.1 919.4L838.4 922.9L835.5 927.2L830.5 928.0Z"/>
<path class="g" d="M803.9 953.0L807.5 953.8L808.2 957.3L805.4 958.1Z"/>
<path class="g" d="M729.4 1019.7L735.8 1023.3L743.0 1029.7L749.5 1036.2L752.3 1043.4L748.7 1044.1L741.6 1037.6L734.4 1029.0L730.1 1023.3Z"/>
<path class="g" d="M751.6 1044.8L760.2 1046.2L771.7 1049.1L770.3 1050.5L754.5 1047.7Z"/>
<path class="g" d="M760.2 1029.0L765.9 1026.2L771.7 1021.9L776.0 1017.6L778.9 1020.4L777.4 1029.0L774.6 1037.6L767.4 1039.1L761.6 1034.8Z"/>
<path class="g" d="M781.7 1033.3L786.0 1031.9L784.6 1037.6L787.5 1041.9L783.2 1041.9L781.7 1037.6Z"/>
<path class="g" d="M784.6 991.8L787.5 990.3L788.2 997.5L786.0 1000.4Z"/>
<path class="g" d="M791.8 1011.8L796.1 1011.8L794.6 1017.6L791.8 1016.1Z"/>
<path class="g" d="M787.5 1003.2L791.8 1006.1L790.3 1009.0Z"/>
<path class="g" d="M809.0 1033.3L814.7 1034.8L823.3 1036.2L831.9 1040.5L840.5 1044.8L846.2 1052.0L829.0 1052.0L824.7 1043.4L814.7 1039.1L810.4 1037.6Z"/>
<path class="g" d="M694.9 1011.2L696.8 1012.4L697.4 1016.2L695.5 1016.8L694.3 1014.3Z"/>
<path class="g" d="M496.5 888.7L499.3 886.4L502.0 888.7L502.5 892.4L500.6 895.2L496.9 896.5L496.0 894.2L496.9 891.5Z"/>
<path class="g" d="M546.1 939.9L550.5 940.2L550.2 942.7L546.3 942.2Z"/>
<path class="g" d="M535.8 926.6L538.3 926.6L538.3 936.6L536.1 936.6Z"/>
<path class="g" d="M589.4 947.9L592.2 947.6L591.8 949.3L589.7 949.3Z"/>
<path class="bd" d="M567.3 814.2L569.6 835.4"/>
<path class="bd" d="M515.4 923.8L529.5 925.0"/>
<path class="bd" d="M539.0 917.9L542.5 913.2L550.8 913.2L560.2 913.2L569.6 915.6L576.7 920.3"/>
<path class="bd" d="M550.8 913.2L555.5 919.1L562.5 925.0L574.3 925.0L577.9 922.6"/>
<path class="bd" d="M557.8 922.6L561.4 928.5L567.3 932.1L566.1 936.8"/>
<path class="bd" d="M602.6 899.1L612.1 903.8L621.5 910.8L622.7 922.6"/>
<path class="bd" d="M607.4 925.0L614.4 932.1L621.5 936.8L633.3 944.3"/>
<path class="bd" d="M614.4 941.5L616.8 950.9L623.9 965.1L630.9 969.8"/>
<path class="bd" d="M597.9 950.9L602.6 962.7L612.1 965.1L621.5 969.8L630.9 969.8"/>
<path class="bd" d="M599.1 946.2L602.6 950.9L614.4 946.2"/>
<path class="bd" d="M611.3 991.9L615.9 992.4L623.3 992.4L632.6 988.7"/>
<path class="bd" d="M632.6 988.7L634.0 992.8"/>
<path class="bd" d="M632.6 988.7L638.6 985.9L640.0 980.8"/>
<path class="bd" d="M641.3 928.9L647.3 926.5L654.5 932.5L660.5 939.7L665.3 942.1"/>
<path class="bd" d="M667.7 930.1L677.3 926.5L694.2 925.3"/>
<path class="bd" d="M670.1 937.3L677.3 933.7L682.1 937.3"/>
<path class="bd" d="M652.1 944.5L660.5 942.1L672.5 940.9L682.1 939.7"/>
<path class="bd" d="M620.8 943.3L634.0 942.1L641.3 940.9L652.1 944.5"/>
<path class="bd" d="M652.1 944.5L650.9 954.2L655.7 963.8L654.5 972.2"/>
<path class="bd" d="M655.7 963.8L664.1 956.6L672.5 949.4L677.3 944.5L682.1 939.7"/>
<path class="bd" d="M672.5 949.4L680.9 951.8L677.3 961.4L670.1 969.8L672.5 978.2"/>
<path class="bd" d="M617.2 942.1L619.6 951.8L624.4 961.4"/>
<path class="bd" d="M713.4 968.6L714.6 978.2"/>
<path class="bd" d="M730.2 965.0L736.3 974.6L733.8 984.2L738.7 990.2"/>
<path class="bd" d="M711.0 904.9L720.6 900.1L736.3 896.5L748.3 901.3L760.3 906.1L772.3 902.5L784.3 892.8"/>
<path class="bd" d="M356.4 1008.1L356.4 1013.4L367.0 1018.7L367.0 1027.2L362.8 1029.4"/>
<path class="bd" d="M381.9 1013.4L385.1 1025.1"/>
<path class="bd" d="M389.4 1023.0L388.3 1027.2"/>
<path class="bd" d="M362.8 1028.3L375.5 1025.1L388.3 1028.3L403.2 1025.1"/>
<path class="bd" d="M340.4 1030.4L350.0 1032.6L356.4 1036.8L361.7 1037.9"/>
<path class="bd" d="M361.7 1037.9L355.3 1042.1L354.3 1054.4"/>
<path class="bd" d="M318.1 992.1L316.0 998.5"/>
<path class="bd" d="M324.5 997.2L325.5 1003.8"/>
<path class="bd" d="M331.4 1003.8L330.9 1010.2"/>
<path class="bd" d="M543.3 837.0L543.3 850.0L544.6 858.4L542.0 866.8L541.4 869.4"/>
<path class="bd" d="M583.8 809.4L581.4 823.6L583.8 840.1L581.4 856.6"/>
<path class="bd" d="M586.7 850.0L584.8 853.9L579.6 861.7L580.9 864.9L578.3 868.1L577.7 874.0"/>
<path class="bd" d="M570.5 872.0L577.7 874.6"/>
<path class="bd" d="M577.7 874.0L579.6 879.8L584.8 883.0L586.1 888.9L588.7 891.5L591.3 894.7L596.4 899.2L600.0 901.2"/>
<path class="bd" d="M569.9 888.9L569.2 896.6L569.9 900.5L566.6 905.7"/>
<path class="bd" d="M569.2 896.6L584.8 897.9L591.3 894.7"/>
<path class="bd" d="M548.5 888.9L549.1 898.6L544.6 901.8L545.9 905.1L548.5 907.0"/>
<path class="bd" d="M549.1 899.2L558.9 904.4L566.6 905.7"/>
<path class="bd" d="M545.9 907.0L554.3 907.0L558.9 904.4"/>
<path class="bd" d="M554.3 908.3L565.3 907.0"/>
<path class="bd" d="M547.2 912.2L553.7 910.9L556.3 914.8"/>
<path class="bd" d="M565.3 907.0L568.6 909.6L578.3 908.3L582.2 914.8"/>
<path class="bd" d="M531.7 891.5L533.0 900.5L534.9 907.0L531.7 912.2L533.0 920.0"/>
<path class="bd" d="M522.6 899.9L533.0 905.7"/>
<path class="bd" d="M497.5 968.5L525.7 987.9L543.1 977.2L551.9 978.2L571.3 986.9L572.3 957.8"/>
<path class="bd" d="M572.3 981.1L596.6 981.1"/>
<path class="bd" d="M538.3 950.0L537.3 957.8L538.3 971.4L543.1 977.2"/>
<path class="bd" d="M504.3 974.3L505.3 995.7L490.7 997.6"/>
<path class="bd" d="M480.0 983.0L487.8 982.1L488.7 974.3L497.5 968.5"/>
<path class="bd" d="M525.7 987.9L524.7 996.6L516.9 998.6L506.2 1006.3L500.4 1008.3L499.4 1019.9"/>
<path class="bd" d="M551.9 978.2L551.9 988.9L548.0 998.6L549.9 1008.3L548.0 1014.1L538.3 1018.0L534.4 1021.9"/>
<path class="bd" d="M571.3 986.9L569.4 996.6L567.4 1006.3L570.3 1010.2L577.1 1019.9L593.7 1019.9L606.3 1021.9L609.2 1033.5L604.3 1041.3"/>
<path class="bd" d="M549.9 1013.1L565.5 1008.3L570.3 1010.2"/>
<path class="bd" d="M553.8 1023.8L559.7 1019.9L577.1 1019.9"/>
<path class="bd" d="M553.8 1023.8L549.9 1037.4L546.1 1043.3"/>
<path class="bd" d="M584.9 1023.8L583.0 1035.5L584.9 1053.5"/>
<path class="bd" d="M592.7 1019.9L593.7 1033.5L604.3 1041.3"/>
<path class="bd" d="M594.6 1014.1L599.5 1004.4L609.2 1006.3L622.8 1013.1L609.2 1022.9"/>
<path class="bd" d="M582.0 1035.5L592.7 1033.5L604.3 1041.3"/>
<path class="bd" d="M510.1 1008.3L511.1 1019.0"/>
<path class="bd" d="M516.9 1007.3L518.9 1018.0"/>
<path class="bd" d="M522.7 1005.4L522.7 1018.0"/>
<path class="bd" d="M524.7 1004.4L534.4 1000.5L548.0 1001.5"/>
<path class="bd" d="M490.7 997.6L492.6 1004.4L499.4 1008.3"/>
<path class="bd" d="M553.8 1043.3L563.5 1047.1L565.5 1053.5"/>
<path class="bd" d="M581.0 1047.1L586.9 1053.0"/>
<path class="r" d="M204.2 813.5L198.5 811.3L191.5 810.4L184.5 808.2L177.4 806.0L173.9 806.0L170.4 802.9L165.1 806.4L158.1 809.9L155.5 815.2L148.5 820.0L152.8 824.9L159.0 832.8L153.7 832.8L145.8 836.3L149.3 841.6L160.8 840.7L161.2 844.2L159.9 847.7L152.8 851.2L150.2 856.5L152.8 861.8L158.1 864.4L159.0 867.9L165.1 868.8L169.5 867.0L173.9 868.8L175.7 870.6L167.8 875.8L162.5 880.2L152.8 886.4L161.6 882.0L169.5 875.8L176.6 870.6L175.7 867.9L182.7 860.9L183.6 857.4L181.0 866.2L188.0 862.7L191.5 860.0L198.5 862.7L204.7 862.7L209.1 864.4L212.6 867.9L217.0 865.3L222.3 872.3L226.6 878.5L228.4 883.7L225.8 882.9L221.4 875.8L217.0 870.6L212.6 869.7L209.1 866.2L204.2 863.1Z"/>
<path class="r" d="M174.8 875.0L177.9 873.6L178.3 875.4L175.7 876.7Z"/>
<path class="r" d="M147.1 862.7L148.9 862.8L148.6 864.4L147.4 864.2Z"/>
<path class="b" d="M204.5 814.2L217.5 815.6L227.9 812.5L234.1 809.4L238.3 814.6L237.8 812.6L245.5 812.0L253.3 815.9L261.1 819.8L262.4 823.6L274.0 826.2L276.6 821.1L285.7 822.3L292.2 824.9L300.0 823.6L302.6 821.1L303.8 827.5L307.7 817.2L312.9 813.3L315.5 815.9L319.4 817.2L323.3 826.2L325.9 813.3L334.9 814.6L336.2 823.6L329.8 831.4L323.3 832.7L314.2 849.6L307.7 860.0L307.0 868.7L313.2 877.0L323.6 879.1L334.1 885.4L336.1 893.7L340.3 897.9L342.4 887.5L345.5 879.1L344.5 868.7L346.6 854.1L354.9 856.2L363.2 860.4L365.3 868.7L371.5 864.5L379.9 877.0L392.4 891.6L392.4 899.9L386.1 904.1L379.9 906.2L365.3 912.4L359.0 918.7L350.7 922.9L338.2 927.0L334.1 929.1L332.0 922.9L325.7 914.5L317.4 908.3L307.0 906.2L243.5 906.2L240.4 904.1L234.1 899.9L227.9 883.3L221.6 870.8L213.3 866.6L204.5 862.5Z"/>
<path class="b" d="M385.1 897.9L392.8 897.4L399.9 910.4L398.6 914.1L391.3 912.4L387.8 906.2Z"/>
<path class="b" d="M367.4 908.3L374.7 907.2L377.8 912.4L371.5 920.8L365.3 917.6L369.5 913.5Z"/>
<path class="r" d="M243.5 907.2L307.0 907.2L317.4 909.3L327.8 914.5L333.0 922.9L334.1 929.1L340.3 924.9L350.7 922.9L359.0 918.7L364.3 913.5L367.4 916.6L365.3 922.9L359.0 927.0L352.8 933.3L348.6 937.4L346.6 945.8L340.3 954.1L336.1 960.3L338.2 971.8L334.1 968.7L329.9 962.4L321.6 960.3L313.2 962.4L304.9 964.5L300.7 970.7L294.5 964.5L288.3 960.3L282.0 956.2L259.1 955.1L250.8 949.9L244.5 941.6L242.4 929.1L243.5 916.6Z"/>
<path class="b0" d="M309.1 706.0L312.2 705.0L321.6 717.5L327.8 723.7L324.7 730.0L317.4 730.0L307.0 725.8L303.9 719.5L304.9 711.2Z"/>
<path class="b0" d="M315.3 694.6L327.8 684.2L332.0 689.4L336.1 677.9L346.6 674.8L354.9 673.7L371.5 677.9L378.8 682.1L377.8 688.3L367.4 698.7L371.5 702.9L363.2 715.4L357.0 723.7L338.2 725.8L328.9 725.8L324.7 723.7L336.1 715.4L329.9 714.3L321.6 709.1Z"/>
<path class="b0" d="M303.8 720.0L320.7 720.0L323.3 727.8L320.7 735.5L316.8 740.7L312.9 739.4L309.7 731.7L305.8 725.2Z"/>
<path class="b0" d="M324.6 720.0L359.6 720.0L355.7 725.2L349.2 729.1L346.6 731.7L347.9 739.4L342.7 748.5L338.8 755.0L344.0 757.6L337.5 762.1L331.1 760.2L319.4 758.9L323.3 752.4L322.0 747.2L328.5 749.8L328.5 738.1L326.5 730.4Z"/>
<path class="b0" d="M303.2 755.0L307.7 756.9L312.9 760.2L318.1 767.9L328.5 769.2L336.2 768.6L338.8 771.8L337.5 777.0L328.5 778.3L318.1 777.0L312.9 774.4L310.3 766.6L306.4 760.2Z"/>
<path class="b0" d="M268.9 738.8L271.5 737.5L272.8 739.4L270.2 740.5Z"/>
<path class="b0" d="M266.9 746.6L271.5 745.3L272.8 747.9L268.9 750.4Z"/>
<path class="b0" d="M284.4 732.3L289.6 734.3L294.8 742.0L294.1 745.3L289.6 740.7L285.7 738.1Z"/>
<path class="b0" d="M300.0 736.8L303.2 739.4L304.5 744.6L301.9 745.9L300.0 742.0Z"/>
<path class="b0" d="M304.5 747.9L307.7 748.5L307.1 749.8Z"/>
<path class="b0" d="M246.8 762.8L254.6 751.7L258.5 750.4L257.2 759.5L248.1 765.3Z"/>
<path class="b0" d="M257.9 766.6L261.1 762.1L268.9 765.3L273.4 769.9L274.7 758.9L276.6 760.2L278.6 766.0L281.2 766.6L281.8 770.5L275.3 773.1L267.6 777.7L266.3 775.7L271.5 772.5L265.0 772.5L257.9 771.8Z"/>
<path class="b0" d="M290.2 763.4L296.1 760.2L298.7 762.8L298.7 773.1L294.8 773.1L292.2 767.9Z"/>
<path class="b0" d="M303.8 771.8L306.4 769.9L308.4 773.1L307.7 775.7L304.5 775.7Z"/>
<path class="b0" d="M241.7 780.2L248.1 779.6L255.9 782.2L259.1 786.1L253.3 792.6L249.4 799.0L245.5 802.9L239.1 797.7Z"/>
<path class="b0" d="M254.6 792.6L261.1 788.7L265.0 792.6L272.8 792.6L275.3 797.7L278.6 790.0L280.5 790.0L283.1 795.1L284.4 804.2L292.2 812.0L287.0 818.5L276.6 818.5L268.9 818.5L263.7 814.6L258.5 812.0L266.3 809.4L262.4 806.8L255.9 805.5Z"/>
<path class="b0" d="M290.9 792.6L294.8 787.4L300.0 785.4L300.6 790.0L302.6 797.7L300.0 801.6L294.8 796.4Z"/>
<path class="b0" d="M305.1 792.6L306.4 783.5L310.3 782.2L315.5 784.1L310.3 790.0L307.7 795.1Z"/>
<path class="b0" d="M297.4 815.9L300.0 812.0L303.8 817.2L301.3 818.5Z"/>
<path class="b0" d="M304.5 804.2L307.7 799.7L312.3 805.5L314.9 815.9L319.4 818.5L320.7 823.6L315.5 823.6L310.3 818.5L306.4 813.3Z"/>
<path class="b0" d="M319.4 787.4L324.6 786.1L328.5 792.6L332.3 787.4L336.2 786.1L337.5 792.6L344.0 796.4L350.5 800.3L355.7 802.9L360.9 808.1L366.0 813.3L367.3 818.5L372.5 826.2L379.0 831.4L376.4 836.6L369.9 834.0L367.3 841.8L372.5 849.6L371.2 854.7L364.7 849.6L359.6 845.7L354.4 840.5L346.6 841.8L344.0 839.2L353.1 836.6L355.7 832.7L350.5 823.6L346.6 818.5L341.4 813.3L333.6 810.7L328.5 808.1L320.7 805.5L318.1 797.7Z"/>
<path class="b0" d="M327.2 837.9L333.6 843.1L337.5 847.0L331.1 848.3L327.2 845.7Z"/>
<path class="b0" d="M338.8 784.8L344.0 786.1L346.6 790.0L341.4 790.6Z"/>
<path class="b0" d="M354.9 829.9L365.3 821.6L371.5 825.7L377.8 832.0L375.7 842.4L367.4 846.6L359.0 838.2Z"/>
<path class="u" d="M506.2 870.9L509.0 871.1L507.6 873.9L511.3 874.8L511.7 876.2L509.9 880.4L509.0 881.7L511.7 882.2L514.1 885.9L515.4 887.8L516.8 892.4L519.6 894.2L519.1 896.1L518.2 897.9L518.7 898.9L515.9 899.8L512.2 900.2L509.4 900.7L505.3 902.6L507.6 899.8L510.4 897.9L506.7 896.5L508.5 895.2L507.1 892.4L509.4 891.5L511.3 890.1L510.8 887.8L508.5 885.0L506.7 884.5L507.6 883.1L505.7 881.3L504.3 878.0L504.8 873.9Z"/>
<path class="u" d="M501.1 885.0L503.4 886.4L503.4 887.8L501.6 887.8Z"/>
<path class="b" d="M564.7 881.4L567.9 880.1L572.5 880.6L575.2 883.4L573.1 886.4L570.5 888.9L568.3 886.6L565.3 884.0Z"/>
<path class="b" d="M576.3 934.8L580.4 932.7L587.5 930.7L593.6 929.7L599.7 930.7L605.8 931.2L611.9 930.7L615.0 932.7L615.0 940.9L609.9 941.9L603.8 942.9L597.7 942.9L591.6 944.9L586.5 943.9L581.4 942.9L578.3 940.9L576.8 937.8Z"/>
<path class="b" d="M576.3 929.7L578.9 929.2L579.4 931.7L576.8 932.7Z"/>
<path class="b" d="M620.8 904.9L623.2 901.3L629.2 897.7L640.1 900.1L652.1 897.7L653.3 889.2L670.1 883.8L674.9 888.0L687.0 888.0L696.6 898.9L709.8 905.5L701.4 912.1L696.6 919.3L694.2 925.3L677.3 925.3L666.5 930.1L661.7 924.1L646.1 918.1L641.3 919.3L640.1 928.9L631.6 924.1L630.4 919.3L634.0 915.7L632.8 913.3L625.6 910.9L621.4 908.5Z"/>
<path class="b" d="M709.8 906.1L718.2 915.7L730.2 925.3L749.5 928.9L763.9 920.5L766.3 918.1L778.3 912.1L783.1 912.1L774.7 908.5L778.3 903.7L784.3 892.8L790.0 891.0L794.8 892.5L801.1 898.7L803.2 907.1L813.6 911.2L809.4 917.5L803.2 923.7L794.8 930.0L790.7 934.1L786.5 934.1L787.5 934.4L777.4 937.3L786.0 941.6L781.7 947.3L784.6 954.5L786.0 960.2L784.6 967.4L778.9 974.6L771.7 978.9L761.6 981.7L754.5 982.4L742.3 980.6L735.0 975.8L733.8 965.0L730.2 962.6L715.8 966.2L694.2 961.4L691.8 954.2L688.2 947.0L682.1 937.3L687.0 934.9L694.2 930.1L696.6 920.5L701.4 912.1Z"/>
<path class="b" d="M632.6 977.1L636.3 977.6L638.1 976.2L640.9 973.0L639.0 978.5L638.1 979.4L633.0 978.5Z"/>
<path class="b" d="M758.8 984.6L761.6 983.2L762.8 986.0L760.9 989.6L758.5 988.9Z"/>
</g>
<g id="ex"><path d="M0 0H5L3.3 1.7L5.2 3.6L3.6 5.2L1.7 3.3L0 5Z"/><path d="M14 0H9L10.7 1.7L8.8 3.6L10.4 5.2L12.3 3.3L14 5Z"/><path d="M0 14H5L3.3 12.3L5.2 10.4L3.6 8.8L1.7 10.7L0 9Z"/><path d="M14 14H9L10.7 12.3L8.8 10.4L10.4 8.8L12.3 10.7L14 9Z"/></g>
</defs>
<style>.g{fill:#d3d3d3}.b{fill:#5e7f96}.r{fill:#b5564e}.w{fill:#fff}.u{fill:var(--uk)}.b0{fill:#5e7f96}.g,.b,.r,.u{stroke:#fff;stroke-width:0.8;stroke-linejoin:round}.bd{fill:none;stroke:#fff;stroke-width:1;stroke-linejoin:round}</style>
<g clip-path="url(#c1)" style="--uk:#6c6d80"><use href="#wm"/></g>
<g transform="translate(908,0)" clip-path="url(#c2)" style="--uk:#776b7b"><use href="#wm"/></g>
<g fill="#555"><use href="#ex" x="955" y="191"/><use href="#ex" x="1843" y="191"/><use href="#ex" x="955" y="630"/><use href="#ex" x="1843" y="630"/></g>
</svg>
<div class="leg" style="left:898px">
<div class="li" style="top:13px;background:#b5564e;border:1px solid #9c3e37"></div><div class="lt" style="top:14px"><span style="display:inline-block;transform:scaleX(.95);transform-origin:left">257</span></div>
<div class="li" style="top:37px;background:#ad5a55;border:1px solid #943f3a"></div><div class="lt" style="top:38px"><span style="display:inline-block;transform:scaleX(.95);transform-origin:left">228</span></div>
<div class="li" style="top:61px;background:#a45d5b;border:1px solid #8b4442"></div><div class="lt" style="top:62px"><span style="display:inline-block;transform:scaleX(.95);transform-origin:left">200</span></div>
<div class="li" style="top:85px;background:#9a6062;border:1px solid #824748"></div><div class="lt" style="top:86px"><span style="display:inline-block;transform:scaleX(.95);transform-origin:left">171</span></div>
<div class="li" style="top:109px;background:#8f6468;border:1px solid #774b4f"></div><div class="lt" style="top:110px"><span style="display:inline-block;transform:scaleX(.95);transform-origin:left">143</span></div>
<div class="li" style="top:133px;background:#85676f;border:1px solid #6d4f57"></div><div class="lt" style="top:134px"><span style="display:inline-block;transform:scaleX(.95);transform-origin:left">115</span></div>
<div class="li" style="top:157px;background:#7b6b77;border:1px solid #62535f"></div><div class="lt" style="top:158px"><span style="display:inline-block;transform:scaleX(.95);transform-origin:left">86.2</span></div>
<div class="li" style="top:181px;background:#716f7e;border:1px solid #585766"></div><div class="lt" style="top:182px"><span style="display:inline-block;transform:scaleX(.95);transform-origin:left">57.8</span></div>
<div class="li" style="top:205px;background:#677686;border:1px solid #4e5e6e"></div><div class="lt" style="top:206px"><span style="display:inline-block;transform:scaleX(.95);transform-origin:left">29.4</span></div>
<div class="li" style="top:229px;background:#5e7f96;border:1px solid #45677e"></div><div class="lt" style="top:230px"><span style="display:inline-block;transform:scaleX(.95);transform-origin:left">1</span></div>
</div>
<div class="leg" style="left:998px">
<div class="li" style="top:13px;background:#b5564e;border:1px solid #9c3e37"></div><div class="lt" style="top:14px"><span style="display:inline-block;transform:scaleX(.95);transform-origin:left">123</span></div>
<div class="li" style="top:37px;background:#ad5a55;border:1px solid #943f3a"></div><div class="lt" style="top:38px"><span style="display:inline-block;transform:scaleX(.95);transform-origin:left">110</span></div>
<div class="li" style="top:61px;background:#a45d5b;border:1px solid #8b4442"></div><div class="lt" style="top:62px"><span style="display:inline-block;transform:scaleX(.95);transform-origin:left">96.2</span></div>
<div class="li" style="top:85px;background:#9a6062;border:1px solid #824748"></div><div class="lt" style="top:86px"><span style="display:inline-block;transform:scaleX(.95);transform-origin:left">82.6</span></div>
<div class="li" style="top:109px;background:#8f6468;border:1px solid #774b4f"></div><div class="lt" style="top:110px"><span style="display:inline-block;transform:scaleX(.95);transform-origin:left">69</span></div>
<div class="li" style="top:133px;background:#85676f;border:1px solid #6d4f57"></div><div class="lt" style="top:134px"><span style="display:inline-block;transform:scaleX(.95);transform-origin:left">55.4</span></div>
<div class="li" style="top:157px;background:#7b6b77;border:1px solid #62535f"></div><div class="lt" style="top:158px"><span style="display:inline-block;transform:scaleX(.95);transform-origin:left">41.8</span></div>
<div class="li" style="top:181px;background:#716f7e;border:1px solid #585766"></div><div class="lt" style="top:182px"><span style="display:inline-block;transform:scaleX(.95);transform-origin:left">28.2</span></div>
<div class="li" style="top:205px;background:#677686;border:1px solid #4e5e6e"></div><div class="lt" style="top:206px"><span style="display:inline-block;transform:scaleX(.95);transform-origin:left">14.6</span></div>
<div class="li" style="top:229px;background:#5e7f96;border:1px solid #45677e"></div><div class="lt" style="top:230px"><span style="display:inline-block;transform:scaleX(.95);transform-origin:left">1</span></div>
</div>
<div class="abs" style="left:0;top:1080px;width:65px;height:1px;background:#b9bcbe"></div>
<div class="abs" style="left:1906px;top:1080px;width:15px;height:1px;background:#b9bcbe"></div>
</body></html>
